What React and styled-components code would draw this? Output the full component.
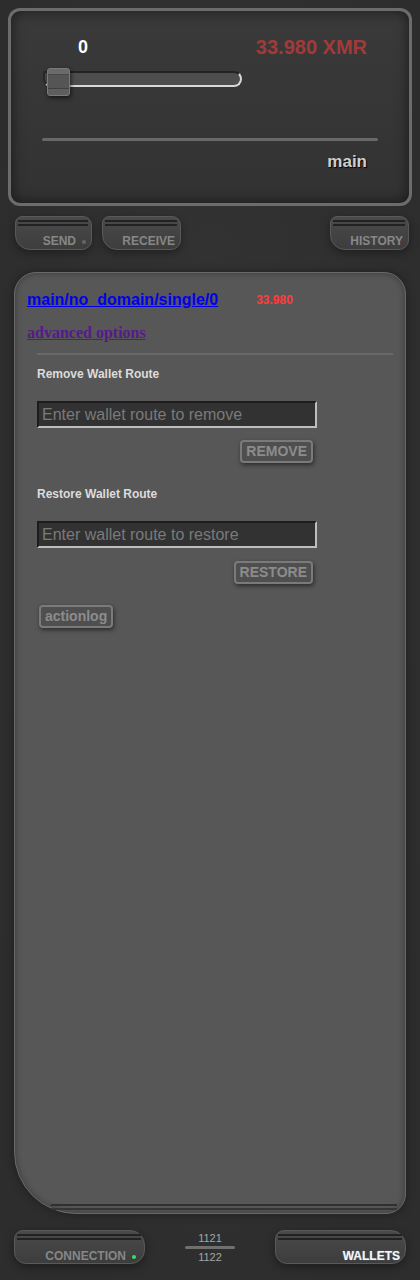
import React from 'react';
import styled, { createGlobalStyle } from 'styled-components';

const GlobalStyle = createGlobalStyle`
  html, body {
    margin: 0;
    padding: 0;
    background: #2f2f2f;
    font-family: "Liberation Sans", Arial, sans-serif;
  }
`;

const Page = styled.div`
  width: 420px;
  height: 1280px;
  box-sizing: border-box;
  padding: 8px 8px 0;
  display: flex;
  flex-direction: column;
  background: radial-gradient(ellipse at 50% 40%, #343434 0%, #2d2d2d 80%);
`;

const Display = styled.div`
  height: 198px;
  box-sizing: border-box;
  border: 3px solid #6c6c6c;
  border-radius: 12px;
  background: linear-gradient(to bottom, #3a3a3a, #323232);
  box-shadow: inset 0 0 14px rgba(0, 0, 0, 0.55);
  padding: 25px 31px 0;
  display: flex;
  flex-direction: column;
`;

const AmountRow = styled.div`
  display: flex;
  align-items: center;
  justify-content: space-between;
  height: 23px;
`;

const SliderValue = styled.div`
  width: 80px;
  margin-left: 1px;
  text-align: center;
  color: #fff;
  font-weight: bold;
  font-size: 18px;
`;

const Balance = styled.div`
  margin-right: 11px;
  color: #a23a3a;
  font-weight: bold;
  font-size: 20px;
`;

const Slider = styled.div`
  position: relative;
  width: 199px;
  height: 28px;
  margin: 9px 0 0 1px;
`;

const Track = styled.div`
  margin-top: 3px;
  height: 16px;
  box-sizing: border-box;
  border-radius: 3px 8px 8px 8px;
  background: #4d4d4d;
  border-top: 2px solid #232323;
  border-left: 2px solid #2a2a2a;
  border-right: 2px solid #d8d8d8;
  border-bottom: 2px solid #d8d8d8;
`;

const Thumb = styled.div`
  position: absolute;
  top: 0;
  left: 4px;
  width: 23px;
  height: 28px;
  box-sizing: border-box;
  border: 1px solid #7a7a7a;
  border-radius: 3px;
  background: linear-gradient(
    to bottom,
    #6a6a6a 0 5px,
    #484848 5px 6px,
    #555 6px 19px,
    #404040 19px 20px,
    #5e5e5e 20px
  );
  box-shadow: 1px 2px 4px rgba(0, 0, 0, 0.6);
`;

const Rule = styled.div`
  height: 3px;
  margin-top: 42px;
  border-radius: 2px;
  background: #686868;
`;

const RouteName = styled.div`
  align-self: flex-end;
  margin: 11px 11px 0 0;
  color: #cfcfcf;
  font-weight: bold;
  font-size: 17px;
  text-shadow: 1px 1px 1px #000;
`;

const TabRow = styled.div`
  display: flex;
  gap: 10px;
  margin: ${p => p.$bottom ? '16px 6px 0' : '10px 3px 0 7px'};
  align-items: ${p => p.$bottom ? 'center' : 'stretch'};
`;

const Tab = styled.div`
  position: relative;
  width: ${p => p.$width}px;
  height: 34px;
  box-sizing: border-box;
  margin-left: ${p => p.$push ? 'auto' : '0'};
  border: 1px solid #595959;
  border-radius: ${p => p.$round ? '9px 15px 14px 12px' : '7px 9px 10px 15px'};
  background: linear-gradient(to bottom, #4a4a4a, #3d3d3d);
  box-shadow: 0 3px 8px rgba(0, 0, 0, 0.35);
  display: flex;
  align-items: flex-end;
  justify-content: flex-end;
  padding: 0 ${p => p.$pad}px ${p => p.$round ? 0 : 1}px 0;
  color: ${p => p.$active ? '#f4f4f4' : '#878787'};
  font-weight: bold;
  font-size: 12px;
  text-shadow: ${p => p.$active ? '0 0 1px #8ab' : 'none'};

  &::before {
    content: '';
    position: absolute;
    top: 3px;
    left: 2px;
    right: 3px;
    height: 2px;
    border-top: 2px solid #222;
    border-bottom: 2px solid #222;
  }
`;

const Dot = styled.span`
  display: inline-block;
  width: 4px;
  height: 4px;
  margin: 0 0 4px 6px;
  border-radius: 50%;
  background: ${p => p.$color};
`;

const Wallet = styled.div`
  position: relative;
  height: 942px;
  margin: 22px 6px 0;
  box-sizing: border-box;
  border: 1px solid #686868;
  border-radius: 22px 22px 20px 62px;
  background: #575757;
  box-shadow: inset 0 0 6px rgba(0, 0, 0, 0.35), 0 0 10px rgba(0, 0, 0, 0.35);
  padding: 18px 12px 0;

  &::after {
    content: '';
    position: absolute;
    left: 36px;
    right: 8px;
    bottom: 3px;
    height: 2px;
    border-top: 2px solid #303030;
    border-bottom: 2px solid #353535;
  }
`;

const WalletHeader = styled.div`
  display: flex;
  align-items: center;
  gap: 38px;
  height: 18px;
`;

const RouteLink = styled.a`
  color: #0000ee;
  font-weight: bold;
  font-size: 16px;
  text-decoration: underline;
`;

const SmallBalance = styled.span`
  color: #ff3d3d;
  font-weight: bold;
  font-size: 12px;
`;

const Advanced = styled.a`
  display: inline-block;
  margin-top: 15px;
  color: #551a8b;
  font-family: "Liberation Serif", "Times New Roman", serif;
  font-weight: bold;
  font-size: 16px;
  text-decoration: underline;
`;

const Divider = styled.div`
  height: 2px;
  margin: 11px 0 0 10px;
  background: #686868;
`;

const Options = styled.div`
  padding-left: 10px;
  display: flex;
  flex-direction: column;
`;

const Label = styled.div`
  margin-top: ${p => p.$top}px;
  color: #dcdcdc;
  font-weight: bold;
  font-size: 12px;
  line-height: 14px;
`;

const Form = styled.div`
  width: 280px;
  margin-top: 20px;
  display: flex;
  flex-direction: column;
  align-items: flex-end;
`;

const RouteInput = styled.input`
  width: 280px;
  height: 27px;
  box-sizing: border-box;
  padding: 0 3px;
  background: #323232;
  border-top: 2px solid #1c1c1c;
  border-left: 2px solid #1c1c1c;
  border-right: 2px solid #bdbdbd;
  border-bottom: 2px solid #bdbdbd;
  color: #ddd;
  font-family: "Liberation Sans", Arial, sans-serif;
  font-size: 16px;
  outline: none;

  &::placeholder {
    color: #7a7a7a;
  }
`;

const Button = styled.button`
  height: 23px;
  box-sizing: border-box;
  margin: ${p => p.$margin};
  padding: 0 4px;
  border: 2px solid #7a7a7a;
  border-radius: 4px;
  background: #4f4f4f;
  box-shadow: 1px 2px 4px rgba(0, 0, 0, 0.5);
  color: #8c8c8c;
  font-family: "Liberation Sans", Arial, sans-serif;
  font-weight: bold;
  font-size: 14px;
  line-height: 17px;
  align-self: ${p => p.$left ? 'flex-start' : 'auto'};
`;

const Counter = styled.div`
  flex: 1;
  display: flex;
  flex-direction: column;
  align-items: center;
  color: #a6a6a6;
  font-size: 11px;
  line-height: 11px;
  padding-top: 2px;
`;

const CounterBar = styled.div`
  width: 50px;
  height: 3px;
  margin: 2px 0 3px;
  border-radius: 2px;
  background: #707070;
`;

export default function App() {
  return (
    <>
      <GlobalStyle />
      <Page>
        <Display>
          <AmountRow>
            <SliderValue>0</SliderValue>
            <Balance>33.980 XMR</Balance>
          </AmountRow>
          <Slider>
            <Track />
            <Thumb />
          </Slider>
          <Rule />
          <RouteName>main</RouteName>
        </Display>

        <TabRow>
          <Tab $width={77} $pad={5}>SEND<Dot $color="#666" /></Tab>
          <Tab $width={79} $pad={5}>RECEIVE</Tab>
          <Tab $width={79} $pad={5} $push>HISTORY</Tab>
        </TabRow>

        <Wallet>
          <WalletHeader>
            <RouteLink href="#">main/no_domain/single/0</RouteLink>
            <SmallBalance>33.980</SmallBalance>
          </WalletHeader>
          <Advanced href="#">advanced options</Advanced>
          <Divider />
          <Options>
            <Label $top={12}>Remove Wallet Route</Label>
            <Form>
              <RouteInput placeholder="Enter wallet route to remove" />
              <Button $margin="12px 4px 0 0">REMOVE</Button>
            </Form>
            <Label $top={24}>Restore Wallet Route</Label>
            <Form>
              <RouteInput placeholder="Enter wallet route to restore" />
              <Button $margin="13px 4px 0 0">RESTORE</Button>
            </Form>
            <Button $left $margin="21px 0 0 2px">actionlog</Button>
          </Options>
        </Wallet>

        <TabRow $bottom>
          <Tab $width={131} $pad={8} $round>CONNECTION<Dot $color="#3ddc6a" /></Tab>
          <Counter>
            <span>1121</span>
            <CounterBar />
            <span>1122</span>
          </Counter>
          <Tab $width={131} $pad={5} $round $active>WALLETS</Tab>
        </TabRow>
      </Page>
    </>
  );
}
